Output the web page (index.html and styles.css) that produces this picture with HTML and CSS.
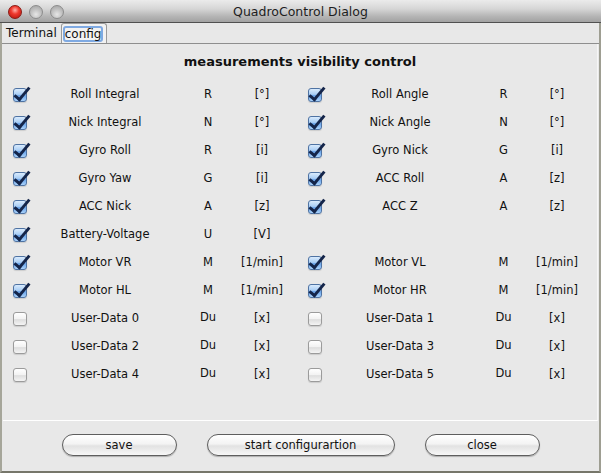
FILE: index.html
```html
<!DOCTYPE html>
<html>
<head>
<meta charset="utf-8">
<link rel="stylesheet" href="styles.css">
</head>
<body>
<div class="window">
  <div class="titlebar">
    <div class="lights">
      <span class="light red"></span>
      <span class="light"></span>
      <span class="light"></span>
    </div>
    <div class="title">QuadroControl Dialog</div>
  </div>
  <div class="body">
    <div class="tabs">
      <span class="tab">Terminal</span>
      <span class="tab active"><span class="focus">config</span></span>
    </div>
    <div class="panel">
      <div class="heading">measurements visibility control</div>
      <div class="grid">
        <div class="c cbcell"><span class="cb on"></span></div><div class="c">Roll Integral</div><div class="c">R</div><div class="c">[°]</div>
        <div class="c cbcell r"><span class="cb on"></span></div><div class="c">Roll Angle</div><div class="c">R</div><div class="c">[°]</div>

        <div class="c cbcell"><span class="cb on"></span></div><div class="c">Nick Integral</div><div class="c">N</div><div class="c">[°]</div>
        <div class="c cbcell r"><span class="cb on"></span></div><div class="c">Nick Angle</div><div class="c">N</div><div class="c">[°]</div>

        <div class="c cbcell"><span class="cb on"></span></div><div class="c">Gyro Roll</div><div class="c">R</div><div class="c">[i]</div>
        <div class="c cbcell r"><span class="cb on"></span></div><div class="c">Gyro Nick</div><div class="c">G</div><div class="c">[i]</div>

        <div class="c cbcell"><span class="cb on"></span></div><div class="c">Gyro Yaw</div><div class="c">G</div><div class="c">[i]</div>
        <div class="c cbcell r"><span class="cb on"></span></div><div class="c">ACC Roll</div><div class="c">A</div><div class="c">[z]</div>

        <div class="c cbcell"><span class="cb on"></span></div><div class="c">ACC Nick</div><div class="c">A</div><div class="c">[z]</div>
        <div class="c cbcell r"><span class="cb on"></span></div><div class="c">ACC Z</div><div class="c">A</div><div class="c">[z]</div>

        <div class="c cbcell"><span class="cb on"></span></div><div class="c">Battery-Voltage</div><div class="c">U</div><div class="c">[V]</div>
        <div class="c"></div><div class="c"></div><div class="c"></div><div class="c"></div>

        <div class="c cbcell"><span class="cb on"></span></div><div class="c">Motor VR</div><div class="c">M</div><div class="c">[1/min]</div>
        <div class="c cbcell r"><span class="cb on"></span></div><div class="c">Motor VL</div><div class="c">M</div><div class="c">[1/min]</div>

        <div class="c cbcell"><span class="cb on"></span></div><div class="c">Motor HL</div><div class="c">M</div><div class="c">[1/min]</div>
        <div class="c cbcell r"><span class="cb on"></span></div><div class="c">Motor HR</div><div class="c">M</div><div class="c">[1/min]</div>

        <div class="c cbcell"><span class="cb"></span></div><div class="c">User-Data 0</div><div class="c up">Du</div><div class="c">[x]</div>
        <div class="c cbcell r"><span class="cb"></span></div><div class="c">User-Data 1</div><div class="c up">Du</div><div class="c">[x]</div>

        <div class="c cbcell"><span class="cb"></span></div><div class="c">User-Data 2</div><div class="c up">Du</div><div class="c">[x]</div>
        <div class="c cbcell r"><span class="cb"></span></div><div class="c">User-Data 3</div><div class="c up">Du</div><div class="c">[x]</div>

        <div class="c cbcell"><span class="cb"></span></div><div class="c">User-Data 4</div><div class="c up">Du</div><div class="c">[x]</div>
        <div class="c cbcell r"><span class="cb"></span></div><div class="c">User-Data 5</div><div class="c up">Du</div><div class="c">[x]</div>
      </div>
    </div>
    <div class="buttons">
      <span class="btn save">save</span>
      <span class="btn start">start configurartion</span>
      <span class="btn close">close</span>
    </div>
  </div>
</div>
</body>
</html>
```
FILE: styles.css
```css
* { box-sizing: border-box; }
html, body { margin: 0; padding: 0; }
body {
  width: 601px;
  height: 473px;
  overflow: hidden;
  background: #e8e8e8;
  font-family: "DejaVu Sans", "Liberation Sans", sans-serif;
  color: #111;
}
.window {
  width: 601px;
  height: 473px;
  display: flex;
  flex-direction: column;
}
.titlebar {
  height: 23px;
  flex: none;
  position: relative;
  background: linear-gradient(#ebebeb 0%, #d6d6d6 40%, #b4b4b4 75%, #a2a2a2 100%);
  border-bottom: 1px solid #505050;
  display: flex;
  align-items: center;
  justify-content: center;
}
.lights {
  position: absolute;
  left: 8px;
  top: 5px;
  display: flex;
  gap: 7px;
}
.light {
  width: 14px;
  height: 14px;
  border-radius: 50%;
  background: radial-gradient(circle at 50% 70%, #e6e6e6 0%, #bdbdbd 55%, #a0a0a0 100%);
  border: 1px solid #8c8c8c;
}
.light.red {
  background: radial-gradient(circle at 50% 35%, #ffb0a8 0%, #f0392e 40%, #b0120a 100%);
  border-color: #8a1a14;
}
.title {
  font-size: 12.5px;
  color: #1e1e1e;
  padding-top: 1px;
}
.body {
  flex: 1;
  display: flex;
  flex-direction: column;
  border-left: 2px solid #a6a69a;
  border-right: 2px solid #9e9e92;
  border-bottom: 2px solid #76766a;
}
.tabs {
  height: 21px;
  flex: none;
  display: flex;
  align-items: flex-end;
  border-bottom: 1px solid #8e8e8e;
  font-size: 12px;
}
.tab {
  height: 20px;
  display: flex;
  align-items: center;
  padding: 0 4px 0 4px;
}
.tab.active {
  margin-left: 0;
  padding: 0 3px 0 1px;
  background: #f2f2f2;
  border: 1px solid #9a9a9a;
  border-bottom: none;
  border-radius: 3px 3px 0 0;
}
.focus {
  border: 2px solid #7ea9e2;
  border-radius: 3px;
  padding: 0;
  line-height: 12px;
  height: 16px;
  display: flex;
  align-items: center;
}
.panel {
  height: 377px;
  flex: none;
  margin: 0 1px 0 1px;
  background: #e8e8e8;
  border-bottom: 1px solid #ffffff;
  border-right: 1px solid #f6f6f6;
  padding-top: 9px;
}
.heading {
  text-align: center;
  font-weight: bold;
  font-size: 13px;
  line-height: 18px;
  height: 18px;
  margin-bottom: 9px;
  color: #111;
}
.grid {
  display: grid;
  grid-template-columns: 37px 130px 76px 32px 47px 150px 57px 50px;
  grid-auto-rows: 28px;
  align-items: center;
  font-size: 11.5px;
}
.c {
  display: flex;
  justify-content: center;
  align-items: center;
  white-space: nowrap;
  height: 28px;
}
.c.up { padding-bottom: 3px; }
.cbcell { justify-content: flex-start; padding-left: 10px; padding-top: 2px; }
.cbcell.r { padding-left: 30px; }
.cb {
  position: relative;
  width: 14px;
  height: 14px;
  border-radius: 3px;
  border: 1px solid #9b9b9b;
  background: linear-gradient(#ffffff 0%, #f2f2f2 50%, #dedede 55%, #f4f4f4 100%);
  box-shadow: 0 1px 1px rgba(0,0,0,0.12);
}
.cb.on {
  border-color: #4f73a3;
  background: linear-gradient(#d9ebfd 0%, #a8cdf5 45%, #6aa4ea 55%, #a9d2fb 100%);
}
.cb.on::after {
  content: "";
  position: absolute;
  left: 4px;
  top: -5px;
  width: 5px;
  height: 14px;
  border-right: 3px solid #14254a;
  border-bottom: 3px solid #14254a;
  transform: rotate(40deg);
  transform-origin: 50% 50%;
}
.buttons {
  flex: 1;
  display: flex;
  justify-content: center;
  align-items: center;
  gap: 30px;
  padding-bottom: 2px;
}
.btn {
  height: 22px;
  border-radius: 11px;
  border: 1px solid #5e5e5e;
  background: linear-gradient(#ffffff 0%, #f3f3f3 45%, #e2e2e2 55%, #f7f7f7 100%);
  box-shadow: 0 1px 1px rgba(0,0,0,0.25);
  font-size: 11.5px;
  display: flex;
  align-items: center;
  justify-content: center;
  color: #111;
}
.save, .close { width: 115px; }
.start { width: 188px; }
```
